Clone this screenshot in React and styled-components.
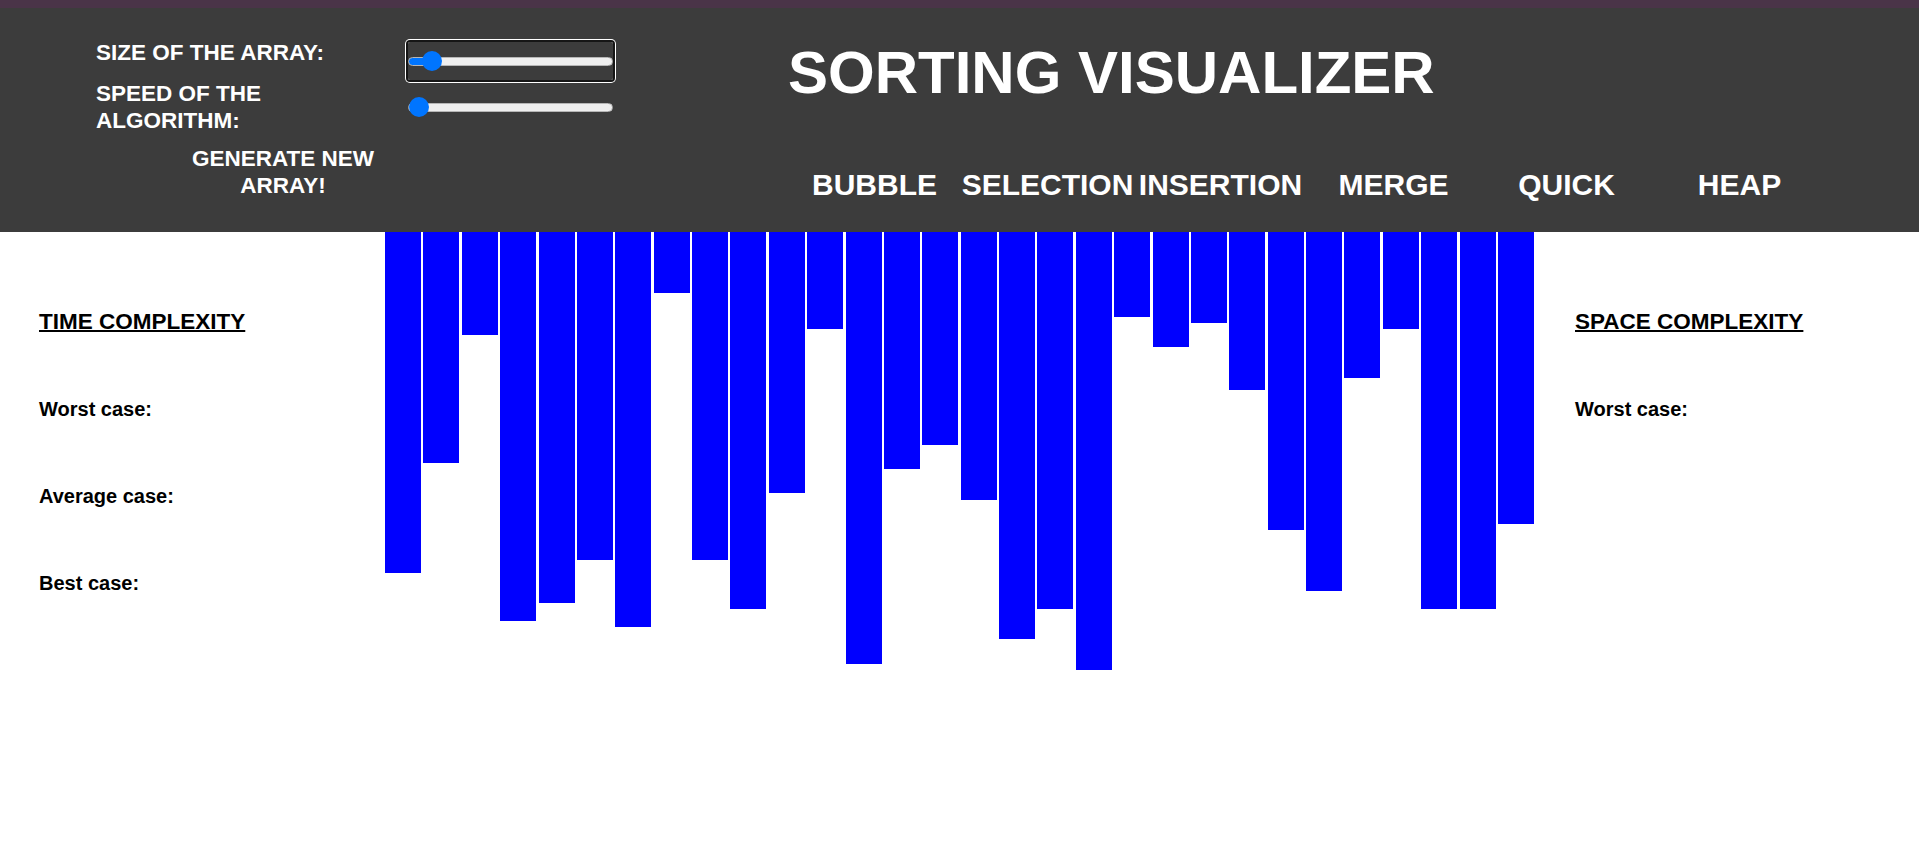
import React, { useState } from "react";
import styled, { createGlobalStyle } from "styled-components";

const GlobalStyle = createGlobalStyle`
  html, body {
    margin: 0;
    padding: 0;
    background: #fff;
  }
  body {
    font-family: "Liberation Sans", Arial, sans-serif;
  }
  * {
    box-sizing: border-box;
  }
`;

const TopStrip = styled.div`
  height: 8px;
  background-color: #4a3448;
`;

const Header = styled.header`
  display: flex;
  height: 224px;
  background-color: #3c3c3c;
  color: #fff;
`;

const ControlsPanel = styled.div`
  display: flex;
  width: 788px;
  flex-shrink: 0;
  padding: 32px 0 0 96px;
`;

const LabelStack = styled.div`
  display: flex;
  flex-direction: column;
  width: 300px;
`;

const Label = styled.div`
  font-size: 22.5px;
  font-weight: 700;
  line-height: 26.4px;
  margin-bottom: ${({ $space }) => $space}px;
`;

const GenerateBtn = styled.button`
  width: 200px;
  margin-left: 87px;
  padding: 0;
  background: none;
  border: none;
  color: #fff;
  font-family: inherit;
  font-size: 22.5px;
  font-weight: 700;
  line-height: 26.4px;
  text-align: center;
  cursor: pointer;
`;

const SliderStack = styled.div`
  display: flex;
  flex-direction: column;
  gap: 8px;
  padding: 2px 0 0 12px;
`;

const Range = styled.input.attrs({ type: "range" })`
  -webkit-appearance: none;
  appearance: none;
  display: block;
  width: 205px;
  height: 38px;
  margin: 0;
  background: transparent;
  border-radius: 2px;
  outline: none;
  box-shadow: ${({ $focused }) =>
    $focused ? "0 0 0 2px #161616, 0 0 0 3px #ffffff" : "none"};
  cursor: pointer;

  &::-webkit-slider-runnable-track {
    height: 9px;
    border-radius: 5px;
    border: 1px solid #b6b6b6;
    background: ${({ $fill }) =>
      `linear-gradient(to right, #0075ff 0%, #0075ff ${$fill}%, #efefef ${$fill}%, #efefef 100%)`};
  }

  &::-webkit-slider-thumb {
    -webkit-appearance: none;
    appearance: none;
    width: 20px;
    height: 20px;
    margin-top: -6.5px;
    border: none;
    border-radius: 50%;
    background: #0075ff;
  }
`;

const MainPanel = styled.div`
  display: flex;
  flex-direction: column;
  padding-top: 29px;
`;

const Title = styled.h1`
  margin: 0;
  font-size: 60px;
  font-weight: 700;
  line-height: 72px;
`;

const Nav = styled.nav`
  display: flex;
  margin-top: 58px;
`;

const AlgoBtn = styled.button`
  width: 173px;
  padding: 0;
  background: none;
  border: none;
  color: #fff;
  font-family: inherit;
  font-size: 30px;
  font-weight: 700;
  line-height: 36px;
  text-align: center;
  white-space: nowrap;
  cursor: pointer;
`;

const Body = styled.main`
  display: flex;
  align-items: flex-start;
`;

const InfoColumn = styled.section`
  display: flex;
  flex-direction: column;
  gap: 64px;
  width: ${({ $width }) => $width};
  flex-shrink: 0;
  padding: 77px 0 0 ${({ $pad }) => $pad}px;
`;

const InfoHeading = styled.div`
  font-size: 22.5px;
  font-weight: 700;
  line-height: 25px;
  text-decoration: underline;
  text-decoration-thickness: 2px;
`;

const InfoLine = styled.div`
  font-size: 20px;
  font-weight: 700;
  line-height: 23px;
`;

const BarsBox = styled.div`
  display: flex;
  align-items: flex-start;
  gap: 2.38px;
  width: 1149px;
  flex-shrink: 0;
`;

const Bar = styled.div`
  width: 36px;
  flex-shrink: 0;
  background-color: #0000ff;
`;

const bars = [
  341, 231, 103, 389, 371, 328, 395, 61, 328, 377, 261, 97, 432, 237, 213,
  268, 407, 377, 438, 85, 115, 91, 158, 298, 359, 146, 97, 377, 377, 292,
];

const algorithms = ["BUBBLE", "SELECTION", "INSERTION", "MERGE", "QUICK", "HEAP"];

const App = () => {
  const [size, setSize] = useState(30);
  const [speed, setSpeed] = useState(1);

  const sizeFill = ((size - 10) / 290) * 100;
  const speedFill = ((speed - 1) / 99) * 100;

  return (
    <>
      <GlobalStyle />
      <TopStrip />
      <Header>
        <ControlsPanel>
          <LabelStack>
            <Label $space={15}>SIZE OF THE ARRAY:</Label>
            <Label $space={12}>SPEED OF THE ALGORITHM:</Label>
            <GenerateBtn>GENERATE NEW ARRAY!</GenerateBtn>
          </LabelStack>
          <SliderStack>
            <Range
              $focused
              $fill={sizeFill}
              min={10}
              max={300}
              value={size}
              onChange={(e) => setSize(Number(e.target.value))}
            />
            <Range
              $fill={speedFill}
              min={1}
              max={100}
              value={speed}
              onChange={(e) => setSpeed(Number(e.target.value))}
            />
          </SliderStack>
        </ControlsPanel>
        <MainPanel>
          <Title>SORTING VISUALIZER</Title>
          <Nav>
            {algorithms.map((name) => (
              <AlgoBtn key={name}>{name}</AlgoBtn>
            ))}
          </Nav>
        </MainPanel>
      </Header>
      <Body>
        <InfoColumn $width="385px" $pad={39}>
          <InfoHeading>TIME COMPLEXITY</InfoHeading>
          <InfoLine>Worst case:</InfoLine>
          <InfoLine>Average case:</InfoLine>
          <InfoLine>Best case:</InfoLine>
        </InfoColumn>
        <BarsBox>
          {bars.map((h, i) => (
            <Bar key={i} style={{ height: h }} />
          ))}
        </BarsBox>
        <InfoColumn $width="auto" $pad={41}>
          <InfoHeading>SPACE COMPLEXITY</InfoHeading>
          <InfoLine>Worst case:</InfoLine>
        </InfoColumn>
      </Body>
    </>
  );
};

export default App;
